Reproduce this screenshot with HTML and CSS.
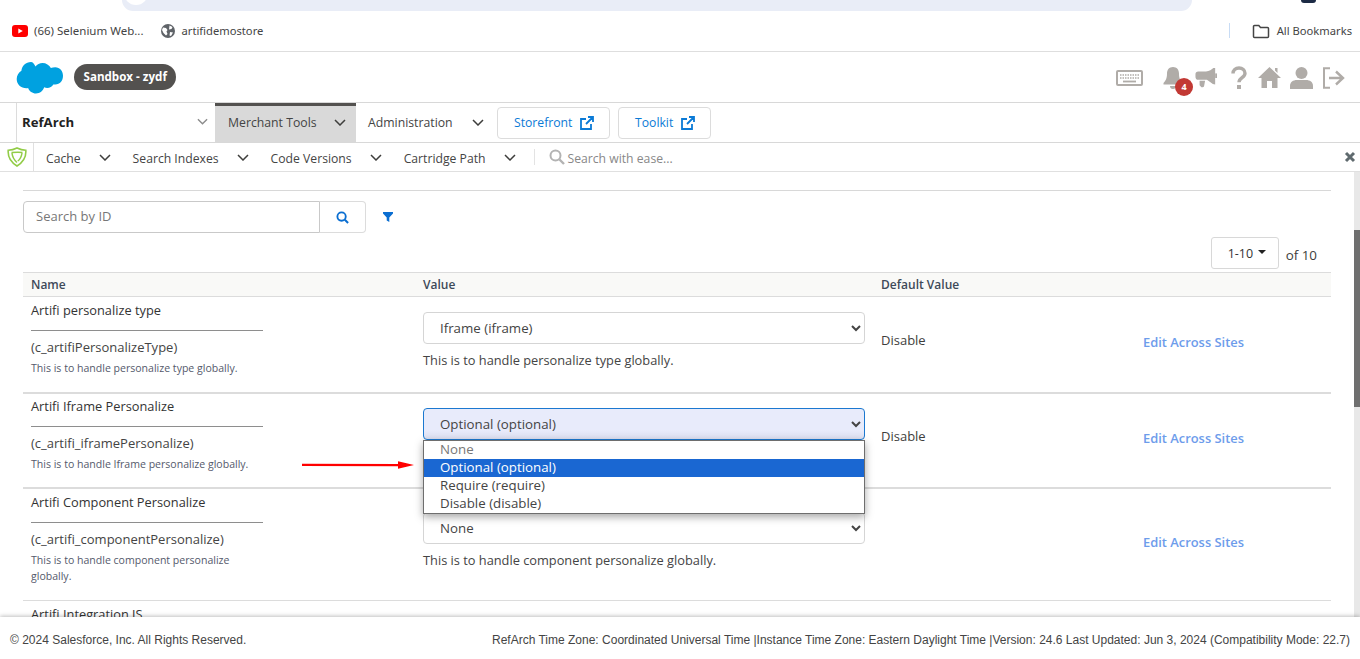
FILE: index.html
```html
<!DOCTYPE html>
<html lang="en">
<head>
<meta charset="utf-8">
<title>Site Preferences</title>
<link rel="stylesheet" href="styles.css">
</head>
<body>
<div class="page">
  <div class="chrome-top"><div class="url-pill"></div><div class="avatar"></div></div>
  <div class="bookmarks">
    <div class="bm">
      <svg class="bm-icon" viewBox="0 0 16 12" width="16" height="12"><rect width="16" height="12" rx="3" fill="#f00"/><path d="M6.300 3.400v5.200L10.800 6z" fill="#fff"/></svg>
      <span class="bm-yt">(66) Selenium Web...</span>
    </div>
    <div class="bm bm-second">
      <svg viewBox="0 0 14 14" width="14" height="14"><circle cx="7" cy="7" r="7" fill="#5f6368"/><path d="M2 3.500l3 .5 1.500 2-1 1.500 1 2.500-1.500 1.500L2.500 9 1 6zM8.500 1.500l3 1.500-1 2-2.500.5zM9 8l3 .5-2 3.500-1.500-.5z" fill="#fff"/></svg>
      <span>artifidemostore</span>
    </div>
    <div class="bm-end">
      <div class="bm-sep"></div>
      <svg viewBox="0 0 18 16" width="18" height="16"><path d="M1.500 3.500a1 1 0 0 1 1-1h4.300l1.700 2h7a1 1 0 0 1 1 1v8a1 1 0 0 1-1 1h-13a1 1 0 0 1-1-1z" fill="none" stroke="#444" stroke-width="1.500"/></svg>
      <span>All Bookmarks</span>
    </div>
  </div>
  <header class="topbar">
    <svg class="cloud" viewBox="0 0 47 33" width="47" height="33"><path fill="#00a1e0" d="M19.500 5.500C21.200 3.300 23.700 2 26.500 2c3.600 0 6.800 2.100 8.400 5.100 1.300-.6 2.800-.9 4.300-.9C44 6.200 47 10 47 14.800s-3 8.800-7.800 8.800c-.7 0-1.300-.1-1.900-.2-1.200 2.100-3.500 3.600-6.100 3.600-1.100 0-2.100-.3-3-.7C27 29.800 24 32.500 20 32.500c-3.600 0-6.700-2.300-7.900-5.500-.5.100-1.100.2-1.700.2C5 27.200.7 23.500.7 18c0-3.500 1.900-6.600 4.700-8.300C6 4.700 9.800 1 15 1c1.800 0 3.200 1.900 4.500 4.500z"/></svg>
    <div class="sandbox">Sandbox - zydf</div>
    <div class="top-icons">
      <svg class="ic-kbd" viewBox="0 0 27 16" width="27" height="16"><rect x="1" y="1" width="25" height="14" rx="1" fill="none" stroke="#b0aca8" stroke-width="2"/><path d="M4 5h19M4 8h19" stroke="#b0aca8" stroke-width="1.600" stroke-dasharray="1.500 1"/><path d="M7 11.500h13" stroke="#b0aca8" stroke-width="1.800"/></svg>
      <div class="bell">
        <svg viewBox="0 0 22 24" width="22" height="24"><path fill="#b0aca8" d="M11 1c3.800 0 6 2.800 6 6.500 0 4.700 1 6.800 3.500 9.500v1.500H1.500V17C4 14.300 5 12.200 5 7.500 5 3.800 7.200 1 11 1zM8 20h6a3 3 0 0 1-6 0z"/></svg>
        <span class="badge">4</span>
      </div>
      <svg class="ic-horn" viewBox="0 0 24 24" width="22" height="22"><path fill="#b0aca8" d="M22 1v18l-2.500-.5L13 14H3.500C1.500 14 .5 12.500.5 10.500V8c0-2 1.200-3 3-3H12c3.500-.5 6.500-2.500 8-4zM5 15h6l-1 5.500a1.500 1.500 0 0 1-1.500 1.500H7L5 20z"/><rect x="22" y="7" width="2" height="5" fill="#b0aca8"/></svg>
      <svg class="ic-q" viewBox="0 0 16 24" width="16" height="24"><path fill="none" stroke="#b0aca8" stroke-width="3.400" d="M2 7.500C2 4 4.500 2 8 2s6 2.100 6 5.200c0 4.500-6 4.300-6 9"/><rect x="6" y="19" width="4" height="4" fill="#b0aca8"/></svg>
      <svg class="ic-home" viewBox="0 0 23 22" width="23" height="22"><path fill="#b0aca8" d="M11.500 0L23 11h-3.500v10h-5.500v-7H9v7H3.500V11H0zM17 1h2.500v5L17 3.500z"/></svg>
      <svg class="ic-user" viewBox="0 0 23 22" width="23" height="22"><circle cx="11.500" cy="6" r="6" fill="#b0aca8"/><path fill="#b0aca8" d="M0 22v-3c0-4 3-6 7-6h9c4 0 7 2 7 6v3z"/></svg>
      <svg class="ic-out" viewBox="0 0 23 22" width="23" height="22"><path d="M8 1.200H2v19.600h6" fill="none" stroke="#b0aca8" stroke-width="2"/><path d="M7 11h13M14 4.500l7 6.500-7 6.500" fill="none" stroke="#b0aca8" stroke-width="2.400"/></svg>
    </div>
  </header>
  <nav class="mainnav">
    <div class="site-select"><b>RefArch</b><svg class="chev chev-light" viewBox="0 0 12 7" width="11" height="7"><path d="M1 1l5 5 5-5"/></svg></div>
    <div class="tab tab-active"><span>Merchant Tools</span><svg class="chev" viewBox="0 0 12 7" width="12" height="7"><path d="M1 1l5 5 5-5"/></svg></div>
    <div class="tab tab-admin"><span>Administration</span><svg class="chev" viewBox="0 0 12 7" width="12" height="7"><path d="M1 1l5 5 5-5"/></svg></div>
    <a class="linkbtn lb-store">Storefront <svg viewBox="0 0 14 14" width="14" height="14"><path d="M6 3H1v10h10V8M8 1h5v5M13 1L6 8" fill="none" stroke="#0b7ad6" stroke-width="1.800"/></svg></a>
    <a class="linkbtn lb-tool">Toolkit <svg viewBox="0 0 14 14" width="14" height="14"><path d="M6 3H1v10h10V8M8 1h5v5M13 1L6 8" fill="none" stroke="#0b7ad6" stroke-width="1.800"/></svg></a>
  </nav>
  <div class="toolbar">
    <div class="shield-cell"><svg viewBox="0 0 20 20" width="20" height="20"><path d="M10 1c3 1.500 5.500 2.200 8.800 2.300.5 6.300-2.800 12-8.800 15.700C4 15.300.7 9.600 1.200 3.300 4.500 3.200 7 2.500 10 1z" fill="none" stroke="#92cc47" stroke-width="1.600"/><path d="M4.500 5.500c3.500-.3 7.500-.6 11 0M5 6c.3 3.500 2 6.800 5 9.500M15 6c-.5 3.600-2.200 6.500-4.200 8" fill="none" stroke="#92cc47" stroke-width="1.500"/></svg></div>
    <div class="tool tool-cache"><span>Cache</span><svg class="chev" viewBox="0 0 12 7" width="12" height="7"><path d="M1 1l5 5 5-5"/></svg></div>
    <div class="tool"><span>Search Indexes</span><svg class="chev" viewBox="0 0 12 7" width="12" height="7"><path d="M1 1l5 5 5-5"/></svg></div>
    <div class="tool"><span>Code Versions</span><svg class="chev" viewBox="0 0 12 7" width="12" height="7"><path d="M1 1l5 5 5-5"/></svg></div>
    <div class="tool"><span>Cartridge Path</span><svg class="chev" viewBox="0 0 12 7" width="12" height="7"><path d="M1 1l5 5 5-5"/></svg></div>
    <div class="tool-search">
      <svg viewBox="0 0 16 16" width="16" height="16"><circle cx="6.500" cy="6.500" r="5" fill="none" stroke="#b3b3b3" stroke-width="2"/><path d="M10.500 10.500l4.500 4.500" stroke="#b3b3b3" stroke-width="2.400"/></svg>
      <span>Search with ease...</span>
    </div>
    <svg class="tool-close" viewBox="0 0 12 12" width="12" height="12"><path d="M2 2l8 8M10 2l-8 8" stroke="#5f6a6e" stroke-width="3"/></svg>
  </div>
  <main class="content">
    <div class="inner">
      <div class="rule"></div>
      <div class="searchrow">
        <div class="searchbox">
          <div class="search-input">Search by ID</div>
          <div class="search-btn"><svg viewBox="0 0 14 14" width="13" height="13"><circle cx="6" cy="6" r="4.500" fill="none" stroke="#0a6ed1" stroke-width="2"/><path d="M9.500 9.500L13 13" stroke="#0a6ed1" stroke-width="2.200"/></svg></div>
        </div>
        <svg class="filter" viewBox="0 0 10 10" width="10" height="10"><path d="M0 0h10v1.500L6.300 5.500V10L3.700 8.500v-3L0 1.500z" fill="#0a6ed1"/></svg>
      </div>
      <div class="pager">
        <div class="pager-box"><span>1-10</span><i class="caret"></i></div>
        <span class="pager-of">of 10</span>
      </div>
      <div class="thead">
        <div>Name</div><div>Value</div><div>Default Value</div><div></div>
      </div>
      <div class="row row-1">
        <div class="c-name">
          <div class="n-title">Artifi personalize type</div>
          <div class="n-line"></div>
          <div class="n-id">(c_artifiPersonalizeType)</div>
          <div class="n-desc">This is to handle personalize type globally.</div>
        </div>
        <div class="c-val">
          <select class="sel"><option>Iframe (iframe)</option></select>
          <div class="v-desc">This is to handle personalize type globally.</div>
        </div>
        <div class="c-def">Disable</div>
        <div class="c-edit"><a>Edit Across Sites</a></div>
      </div>
      <div class="row row-2">
        <div class="c-name">
          <div class="n-title">Artifi Iframe Personalize</div>
          <div class="n-line"></div>
          <div class="n-id">(c_artifi_iframePersonalize)</div>
          <div class="n-desc">This is to handle Iframe personalize globally.</div>
        </div>
        <div class="c-val c-val-open">
          <select class="sel sel-focus"><option>Optional (optional)</option></select>
          <div class="popup">
            <div class="opt opt-muted">None</div>
            <div class="opt opt-on">Optional (optional)</div>
            <div class="opt">Require (require)</div>
            <div class="opt">Disable (disable)</div>
          </div>
          <svg class="arrow" viewBox="0 0 112 8" width="112" height="8"><path d="M0 2.700l96 .4V.3L112 4 96 7.700V5.200L0 5z" fill="#f00"/></svg>
        </div>
        <div class="c-def">Disable</div>
        <div class="c-edit"><a>Edit Across Sites</a></div>
      </div>
      <div class="row row-3">
        <div class="c-name">
          <div class="n-title">Artifi Component Personalize</div>
          <div class="n-line"></div>
          <div class="n-id">(c_artifi_componentPersonalize)</div>
          <div class="n-desc">This is to handle component personalize globally.</div>
        </div>
        <div class="c-val">
          <select class="sel"><option>None</option></select>
          <div class="v-desc">This is to handle component personalize globally.</div>
        </div>
        <div class="c-def"></div>
        <div class="c-edit"><a>Edit Across Sites</a></div>
      </div>
      <div class="row row-4">
        <div class="c-name">
          <div class="n-title">Artifi Integration JS</div>
        </div>
      </div>
    </div>
    <div class="scrollbar"><div class="thumb"></div></div>
  </main>
  <footer class="footer">
    <div>© 2024 Salesforce, Inc. All Rights Reserved.</div>
    <div>RefArch Time Zone: Coordinated Universal Time |Instance Time Zone: Eastern Daylight Time |Version: 24.6 Last Updated: Jun 3, 2024 (Compatibility Mode: 22.7)</div>
  </footer>
</div>
</body>
</html>
```
FILE: styles.css
```css
* { box-sizing: border-box; }
html, body { margin: 0; height: 100%; overflow: hidden; background: #fff; }
body { font-family: "Open Sans", "Noto Sans", sans-serif; color: #3e3e3c; font-size: 12.800px; }
.page { display: flex; flex-direction: column; height: 659px; overflow: hidden; }
svg { display: block; flex: none; }

.chrome-top { height: 11px; flex: none; padding-left: 122px; padding-right: 168px; position: relative; }
.url-pill { height: 11px; background: #e9edf7; border-radius: 0 0 18px 18px; position: relative; }
.url-pill::before { content: ""; position: absolute; left: 2px; top: -9px; width: 24px; height: 14px; border-radius: 0 0 12px 12px; background: #fff; }
.avatar { position: absolute; left: 1301px; top: 0; width: 15px; height: 3px; border-radius: 0 0 8px 8px; background: #1c2b45; }

.bookmarks { height: 41px; flex: none; display: flex; align-items: center; padding: 0 8px 1px 12px; border-bottom: 1px solid #dedede; font-family: "Noto Sans", sans-serif; font-size: 11.200px; color: #444; }
.bm { display: flex; align-items: center; gap: 6px; }
.bm-yt { font-size: 11.500px; }
.bm-second { margin-left: 17px; gap: 7px; }
.bm-end { margin-left: auto; display: flex; align-items: center; gap: 7px; }
.bm-sep { width: 1px; height: 15px; background: #c8dcf5; margin-right: 15px; }

.topbar { height: 51px; flex: none; display: flex; align-items: center; padding: 0 15px 0 16px; border-bottom: 1px solid #d8d8d8; }
.sandbox { margin-left: 11px; height: 26px; line-height: 26px; padding: 0 9px 0 9.500px; background: #53514f; color: #fff; font-weight: 700; font-size: 11.600px; border-radius: 13px; }
.top-icons { margin-left: auto; display: flex; align-items: center; padding-top: 2px; }
.ic-kbd { margin-right: 19px; }
.bell { position: relative; width: 22px; height: 24px; margin-right: 11px; }
.badge { position: absolute; left: 13px; top: 12px; width: 18px; height: 18px; border-radius: 50%; background: #c23934; color: #fff; font-size: 9px; font-weight: 700; line-height: 18px; text-align: center; }
.ic-horn { margin-right: 14px; }
.ic-q { margin-right: 11px; }
.ic-home { margin-right: 9px; }
.ic-user { margin-right: 9px; }

.mainnav { height: 40px; flex: none; display: flex; align-items: stretch; padding-left: 16px; border-bottom: 1px solid #d8d8d8; }
.site-select { width: 199px; border-left: 1px solid #dcdcdc; display: flex; align-items: center; justify-content: space-between; padding: 0 7px 2px 5px; color: #222; font-size: 13.200px; }
.chev { fill: none; stroke: #3e3e3c; stroke-width: 1.500; }
.chev-light { stroke: #8b8b8b; }
.tab { display: flex; align-items: center; font-size: 12.250px; color: #444; }
.tab-active { width: 141px; background: #d9d9d9; border-top: 3px solid #53514f; padding: 0 10px 3px 13px; justify-content: space-between; }
.tab-admin { width: 141px; padding: 0 13px 0 12px; justify-content: space-between; }
.linkbtn { align-self: center; height: 32px; border: 1px solid #dcdcdc; border-radius: 4px; display: flex; align-items: center; gap: 8px; color: #0b7ad6; font-size: 12.200px; }
.lb-store { width: 113px; padding-left: 16px; }
.lb-tool { width: 93px; padding-left: 16px; margin-left: 8px; }

.toolbar { height: 29px; flex: none; display: flex; align-items: center; border-bottom: 1px solid #e0e0e0; font-size: 12.200px; color: #444; }
.toolbar span { padding-top: 2px; }
.shield-cell { width: 34px; height: 100%; display: flex; align-items: center; justify-content: center; border-right: 1px solid #e0e0e0; padding-left: 1px; }
.tool { display: flex; align-items: center; gap: 18px; margin-right: 22px; }
.tool-cache { margin-left: 12px; }
.tool-search { display: flex; align-items: center; gap: 3px; color: #888; border-left: 1px solid #e3e3e3; height: 16px; padding-left: 14px; margin-left: -4px; }
.tool-close { margin-left: auto; margin-right: 4px; }

.content { flex: 1; min-height: 0; position: relative; overflow: hidden; }
.inner { padding: 18px 29px 0 23px; }
.rule { height: 1px; background: #d8d8d8; }
.searchrow { margin-top: 10px; display: flex; align-items: center; }
.searchbox { display: flex; width: 343px; height: 32px; }
.search-input { flex: 1; border: 1px solid #c9c9c9; border-radius: 4px 0 0 4px; padding-left: 12px; line-height: 28px; color: #777; font-size: 13px; }
.search-btn { width: 46px; border: 1px solid #dcdcdc; border-left: 0; border-radius: 0 4px 4px 0; display: flex; align-items: center; justify-content: center; }
.filter { margin-left: 17px; }
.pager { margin-top: 4px; height: 32px; display: flex; justify-content: flex-end; align-items: center; padding-right: 14px; }
.pager-box { width: 68px; height: 32px; border: 1px solid #d8d8d8; border-radius: 3px; display: flex; align-items: center; padding: 0 12px 0 16px; justify-content: space-between; color: #333; font-size: 12.500px; }
.caret { width: 0; height: 0; border: 4px solid transparent; border-top-color: #222; border-bottom: 0; margin-top: -3px; }
.pager-of { margin-left: 7px; margin-top: 3px; font-size: 13.400px; }
.thead { margin-top: 3px; height: 25px; display: grid; grid-template-columns: 392px 458px 262px 1fr; background: #f9f9f7; border-top: 1px solid #dcdcdc; border-bottom: 1px solid #dcdcdc; align-items: center; font-weight: 600; font-size: 12px; color: #3e4a59; padding-left: 8px; }
.row { display: grid; grid-template-columns: 392px 458px 262px 1fr; padding-left: 8px; position: relative; }
.row-1 { height: 97px; border-bottom: 2px solid #dcdcdc; }
.row-2 { height: 95px; border-bottom: 2px solid #dcdcdc; }
.row-3 { height: 112px; border-bottom: 1px solid #dcdcdc; }
.c-name { width: 232px; padding-top: 4px; }
.n-title { line-height: 18px; color: #333; }
.n-line { height: 1px; background: #8e8e8e; margin-top: 11px; }
.n-id { margin-top: 6px; line-height: 20px; color: #444; font-size: 13px; }
.n-desc { margin-top: 3px; font-size: 10.560px; line-height: 16px; color: #54596b; }
.c-val { padding-top: 15px; position: relative; width: 442px; }
.sel { display: block; width: 442px; height: 32px; border: 1px solid #d5d5d5; border-radius: 4px; padding-left: 12px; background: #fff; font: inherit; font-size: 13.300px; color: #444; outline: 0; }
.sel-focus { background: linear-gradient(#e8ebfb 70%, #dcdff0); border-color: #1b78d0; }
.v-desc { margin-top: 7px; line-height: 18px; color: #444; }
.c-def { padding-top: 34px; line-height: 18px; font-size: 13px; }
.c-edit { padding-top: 36px; line-height: 18px; font-weight: 600; font-size: 12.900px; color: #6d9ceb; }
.row-2 .c-val { padding-top: 14px; }
.row-2 .c-name { padding-top: 3px; }
.row-2 .c-def { padding-top: 33px; }
.row-2 .c-edit { padding-top: 35px; }
.row-3 .c-name { padding-top: 4px; }
.row-3 .c-val { padding-top: 23px; }
.row-3 .c-edit { padding-top: 44px; }
.row-3 .n-desc { padding-right: 10px; }
.row-4 .c-name { padding-top: 4px; }

.popup { position: absolute; left: 0; top: 46px; width: 442px; height: 74px; background: #fff; border: 1px solid #6e6e6e; box-shadow: 0 3px 8px rgba(0,0,0,.35); z-index: 5; font-size: 13.300px; }
.opt { height: 18px; line-height: 16px; padding-left: 16px; color: #444; }
.opt-muted { color: #777; }
.opt-on { background: #1a67d2; color: #fff; }
.arrow { position: absolute; left: -121px; top: 67px; }

.scrollbar { position: absolute; right: 0; top: 0; bottom: 0; width: 6px; background: #e8e8e8; }
.thumb { position: absolute; left: 0; right: 0; top: 58px; height: 177px; background: #6f6f6f; }

.footer { height: 42px; flex: none; position: relative; background: #fff; box-shadow: 0 -1px 4px rgba(0,0,0,.25); display: flex; justify-content: space-between; align-items: center; padding: 4px 10px 0; font-family: "Liberation Sans", Arial, sans-serif; font-size: 12px; color: #444; }
```
